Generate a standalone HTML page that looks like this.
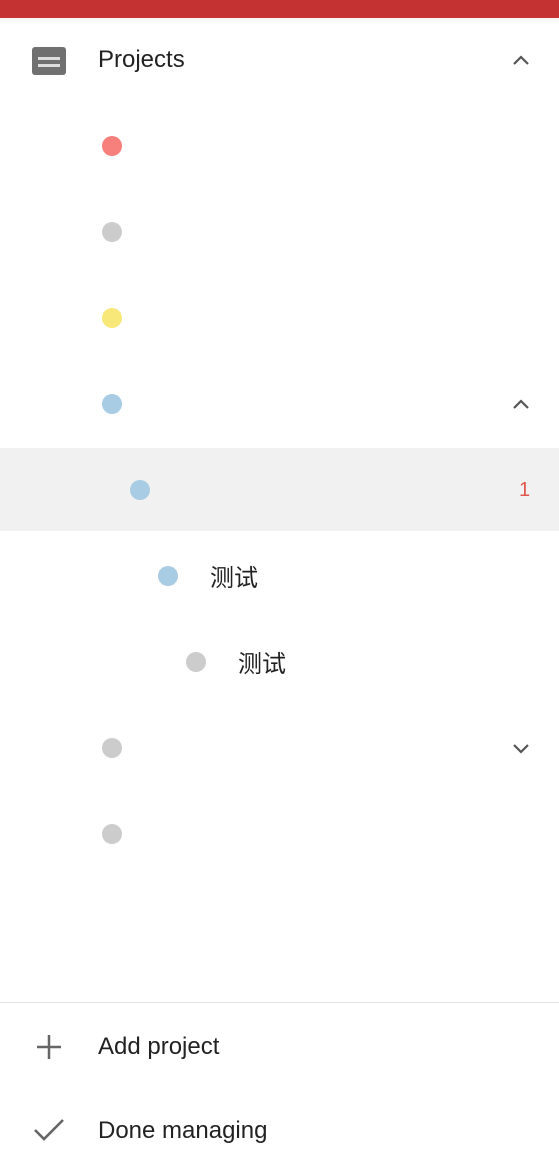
<!DOCTYPE html>
<html><head><meta charset="utf-8"><style>
body{margin:0;width:559px;height:1165px;background:#fff;position:relative;overflow:hidden;font-family:"Liberation Sans","Noto Sans CJK SC",sans-serif;}
.bar{position:absolute;left:0;top:0;width:559px;height:18px;background:#c53232;}
.abs{position:absolute;}
.dot{position:absolute;width:20px;height:20px;border-radius:50%;}
.t{position:absolute;font-size:24px;color:#222;}
</style></head><body>
<div class="bar"></div>
<div class="abs" style="left:0;top:18px;width:559px;height:6px;background:linear-gradient(#f4f4f4,#fff)"></div>
<svg class="abs" style="left:31px;top:46px" width="36" height="30"><rect x="1" y="1" width="34" height="28" rx="3" fill="#707070"/><rect x="7" y="11" width="22" height="3" fill="#ddd"/><rect x="7" y="18" width="22" height="3" fill="#ddd"/></svg>
<div class="t" style="left:98px;top:46px;font-size:24px">Projects</div>
<svg class="abs" style="left:512px;top:54px" width="18" height="12"><path d="M2 10 L9 3 L16 10" stroke="#555" stroke-width="2.2" fill="none"/></svg>
<div class="dot" style="left:102px;top:136px;background:#f77f7c"></div>
<div class="dot" style="left:102px;top:222px;background:#ccc"></div>
<div class="dot" style="left:102px;top:308px;background:#f8e87a"></div>
<div class="dot" style="left:102px;top:394px;background:#a8cce4"></div>
<svg class="abs" style="left:512px;top:398px" width="18" height="12"><path d="M2 10 L9 3 L16 10" stroke="#555" stroke-width="2.2" fill="none"/></svg>
<div class="abs" style="left:0;top:448px;width:559px;height:83px;background:#f1f1f1"></div>
<div class="dot" style="left:130px;top:480px;background:#a8cce4"></div>
<div class="abs" style="left:519px;top:479px;font-size:20px;color:#e0584d">1</div>
<div class="dot" style="left:158px;top:566px;background:#a8cce4"></div>
<div class="t" style="left:210px;top:558px">测试</div>
<div class="dot" style="left:186px;top:652px;background:#ccc"></div>
<div class="t" style="left:238px;top:644px">测试</div>
<div class="dot" style="left:102px;top:738px;background:#ccc"></div>
<svg class="abs" style="left:512px;top:742px" width="18" height="12"><path d="M2 3 L9 10 L16 3" stroke="#555" stroke-width="2.2" fill="none"/></svg>
<div class="dot" style="left:102px;top:824px;background:#ccc"></div>
<div class="abs" style="left:0;top:1002px;width:559px;height:1px;background:#e2e2e2"></div>
<svg class="abs" style="left:36px;top:1034px" width="26" height="26"><path d="M13 1V25M1 13H25" stroke="#666" stroke-width="2.5"/></svg>
<div class="t" style="left:98px;top:1033px">Add project</div>
<svg class="abs" style="left:33px;top:1118px" width="32" height="24"><path d="M2 12 L11 21 L30 2" stroke="#666" stroke-width="2.6" fill="none"/></svg>
<div class="t" style="left:98px;top:1117px">Done managing</div>
</body></html>
